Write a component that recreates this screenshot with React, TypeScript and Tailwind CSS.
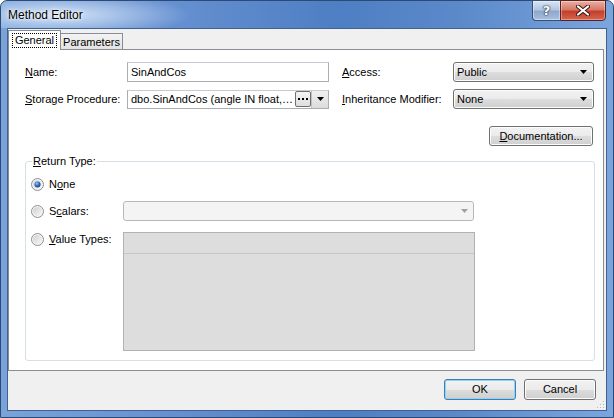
import React from "react";

const btn =
  "rounded-[3px] border border-[#707070] bg-[linear-gradient(#f2f2f2_0%,#ebebeb_50%,#dddddd_51%,#cfcfcf_100%)] shadow-[inset_0_0_0_1px_#fcfcfc]";

function Arrow({ color = "#000" }: { color?: string }) {
  return (
    <svg width="7" height="4" viewBox="0 0 7 4">
      <path d="M0 0h7L3.5 4z" fill={color} />
    </svg>
  );
}

function Radio({ checked, id }: { checked?: boolean; id: string }) {
  return (
    <svg width="13" height="13" viewBox="0 0 13 13" className="shrink-0">
      <defs>
        <linearGradient id={`rg${id}`} x1="0" y1="0" x2="1" y2="1">
          <stop offset="0" stopColor="#d0d0d0" />
          <stop offset="1" stopColor="#f8f8f8" />
        </linearGradient>
        <radialGradient id={`rb${id}`} cx="0.4" cy="0.35" r="0.7">
          <stop offset="0" stopColor="#9ad0f5" />
          <stop offset="0.5" stopColor="#2e6fbf" />
          <stop offset="1" stopColor="#16437e" />
        </radialGradient>
      </defs>
      <circle cx="6.5" cy="6.5" r="6" fill="#f4f4f4" stroke="#8e8f8f" strokeWidth="1" />
      <circle cx="6.5" cy="6.5" r="4.5" fill={`url(#rg${id})`} />
      {checked && <circle cx="6.5" cy="6.5" r="3" fill={`url(#rb${id})`} />}
    </svg>
  );
}

function Label({ pre = "", u, post }: { pre?: string; u: string; post: string }) {
  return (
    <span className="whitespace-nowrap">
      {pre}
      <span className="underline underline-offset-[1px]">{u}</span>
      {post}
    </span>
  );
}

export default function App() {
  return (
    <div className="w-[614px] h-[418px] font-['Liberation_Sans',Arial,sans-serif] text-[11px] text-black">
      <div className="w-[614px] h-[418px] flex flex-col border border-[#2d4a75] rounded-t-[7px] bg-[linear-gradient(90deg,#7aa3da_0%,#6892d2_25%,#4e7ec3_55%,#5b89ca_75%,#7ba5dd_100%)]">
        {/* Title bar */}
        <div className="h-[27px] flex items-start shrink-0 rounded-t-[6px] bg-[radial-gradient(ellipse_130px_22px_at_60px_14px,rgba(215,230,248,0.95),rgba(215,230,248,0)_100%)]">
          <div className="ml-[7px] mt-[6px] text-[12px] leading-[16px] [text-shadow:0_0_6px_#fff,0_0_3px_#fff]">
            Method Editor
          </div>
          <div className="ml-auto mr-[7px] -mt-[1px] flex">
            <div className="w-[28px] h-[21px] rounded-bl-[4px] border border-[#34507a] border-r-0 bg-[linear-gradient(#dbe5f2_0%,#b3c6e0_45%,#8ea8cc_55%,#a9c0de_100%)] shadow-[inset_0_0_0_1px_rgba(255,255,255,0.4)] flex items-center justify-center">
              <span className="font-['DejaVu_Sans',sans-serif] font-bold text-[13px] leading-none text-white [text-shadow:0_0_1px_#24385a,0_0_1px_#24385a,0_0_2px_#24385a]">
                ?
              </span>
            </div>
            <div className="w-[46px] h-[21px] rounded-br-[4px] border border-[#5a2020] bg-[linear-gradient(#eab0a4_0%,#d77a68_45%,#c3402b_55%,#d6654d_100%)] shadow-[inset_0_0_0_1px_rgba(255,255,255,0.35)] flex items-center justify-center">
              <svg width="14" height="11" viewBox="0 0 14 11">
                <path d="M2 1.5l10 8M12 1.5l-10 8" stroke="#3a1410" strokeWidth="4" strokeLinecap="round" />
                <path d="M2 1.5l10 8M12 1.5l-10 8" stroke="#fff" strokeWidth="2.2" strokeLinecap="round" />
              </svg>
            </div>
          </div>
        </div>

        {/* Body */}
        <div className="flex-1 mx-[6px] mb-[6px] border border-[#42618f] bg-[#f0f0f0] flex flex-col">
          <div className="pt-[1px] pr-[2px] flex flex-col">
            {/* Tabs */}
            <div className="flex items-end h-[19px]">
              <div className="relative z-10 w-[53px] h-[20px] -mb-[1px] bg-white border border-b-0 border-[#898c95] flex items-start justify-center pt-[2px]">
                <div className="border border-dotted border-black px-[2px] h-[15px] leading-[13px]">General</div>
              </div>
              <div className="w-[62px] h-[16px] border border-l-0 border-b-0 border-[#898c95] bg-[linear-gradient(#f3f3f3,#e3e3e3)] flex items-center justify-center leading-[14px] pt-[1px]">
                Parameters
              </div>
            </div>

            {/* Panel */}
            <div className="h-[322px] bg-white border border-[#898c95] pt-[12px] pl-[16px] flex flex-col">
              <div className="w-[569px] flex flex-col">
                {/* Row 1 */}
                <div className="flex items-center h-[20px]">
                  <div className="w-[102px]">
                    <Label u="N" post="ame:" />
                  </div>
                  <div className="w-[202px] h-[20px] border border-[#abadb3] border-t-[#c8cace] pl-[3px] flex items-center">
                    SinAndCos
                  </div>
                  <div className="w-[13px]" />
                  <div className="w-[111px]">
                    <Label u="A" post="ccess:" />
                  </div>
                  <div className={`w-[141px] h-[20px] ${btn} flex items-center pl-[3px] pr-[6px]`}>
                    <span className="flex-1">Public</span>
                    <Arrow />
                  </div>
                </div>
                {/* Row 2 */}
                <div className="flex items-center h-[20px] mt-[7px]">
                  <div className="w-[102px]">
                    <Label u="S" post="torage Procedure:" />
                  </div>
                  <div className="w-[202px] h-[19px] border border-[#abadb3] border-t-[#c8cace] pl-[3px] flex items-center">
                    <span className="flex-1 whitespace-nowrap overflow-hidden">dbo.SinAndCos (angle IN float,…</span>
                    <div className="w-[16px] h-[16px] shrink-0 rounded-[2px] border border-[#707070] bg-[linear-gradient(#f4f4f4,#dedede)] flex items-center justify-center">
                      <svg width="10" height="3" viewBox="0 0 10 3">
                        <rect x="0" y="0" width="2" height="2" fill="#000" />
                        <rect x="4" y="0" width="2" height="2" fill="#000" />
                        <rect x="8" y="0" width="2" height="2" fill="#000" />
                      </svg>
                    </div>
                    <div className="w-[17px] h-[17px] shrink-0 bg-[linear-gradient(#f0f0f0,#dcdcdc)] border-l border-[#c0c0c0] flex items-center justify-center">
                      <Arrow />
                    </div>
                  </div>
                  <div className="w-[13px]" />
                  <div className="w-[111px]">
                    <Label u="I" post="nheritance Modifier:" />
                  </div>
                  <div className={`w-[141px] h-[20px] ${btn} flex items-center pl-[3px] pr-[6px]`}>
                    <span className="flex-1">None</span>
                    <Arrow />
                  </div>
                </div>
                {/* Documentation */}
                <div className="flex justify-end mt-[17px] pr-[1px]">
                  <div className={`w-[104px] h-[20px] ${btn} flex items-center justify-center`}>
                    <Label u="D" post="ocumentation..." />
                  </div>
                </div>
              </div>

              {/* Group box */}
              <div className="relative mt-[15px] w-[570px] h-[200px] border border-[#d5dfe5] rounded-[3px] pl-[5px] pt-[15px] flex flex-col">
                <div className="absolute -top-[8px] left-[6px] bg-white px-[1px] leading-[14px]">
                  <Label u="R" post="eturn Type:" />
                </div>
                <div className="flex items-center h-[14px]">
                  <Radio checked id="a" />
                  <span className="ml-[5px]">
                    <Label pre="N" u="o" post="ne" />
                  </span>
                </div>
                <div className="flex items-center h-[20px] mt-[10px]">
                  <div className="w-[92px] flex items-center">
                    <Radio id="b" />
                    <span className="ml-[5px]">
                      <Label pre="S" u="c" post="alars:" />
                    </span>
                  </div>
                  <div className="w-[351px] h-[20px] rounded-[3px] border border-[#b5b8ba] bg-[#f4f4f4] flex items-center justify-end pr-[5px]">
                    <Arrow color="#a0a0a0" />
                  </div>
                </div>
                <div className="flex items-start mt-[11px]">
                  <div className="w-[92px] flex items-center h-[14px]">
                    <Radio id="c" />
                    <span className="ml-[5px]">
                      <Label u="V" post="alue Types:" />
                    </span>
                  </div>
                  <div className="w-[352px] h-[119px] border border-[#b2b2b2] bg-[#dddddd]">
                    <div className="h-[21px] border-b border-[#c6c6c6]" />
                  </div>
                </div>
              </div>
            </div>
          </div>

          {/* Bottom buttons */}
          <div className="relative flex-1 flex justify-end items-start pt-[8px] pr-[10px]">
            <div className="w-[72px] h-[21px] rounded-[3px] border border-[#3c7fb1] bg-[linear-gradient(#f2f2f2_0%,#ebebeb_50%,#dddddd_51%,#cfcfcf_100%)] shadow-[inset_0_0_0_1px_#8fd3f7] flex items-center justify-center">
              OK
            </div>
            <div className={`ml-[8px] w-[72px] h-[21px] ${btn} flex items-center justify-center`}>Cancel</div>
            <svg className="absolute right-[1px] bottom-[1px]" width="10" height="10" viewBox="0 0 10 10">
              {[
                [8, 2],
                [5, 5],
                [8, 5],
                [2, 8],
                [5, 8],
                [8, 8],
              ].map(([x, y], i) => (
                <g key={i}>
                  <rect x={x} y={y} width="1" height="1" fill="#b8b8b8" />
                  <rect x={x + 1} y={y + 1} width="1" height="1" fill="#ffffff" />
                </g>
              ))}
            </svg>
          </div>
        </div>
      </div>
    </div>
  );
}
